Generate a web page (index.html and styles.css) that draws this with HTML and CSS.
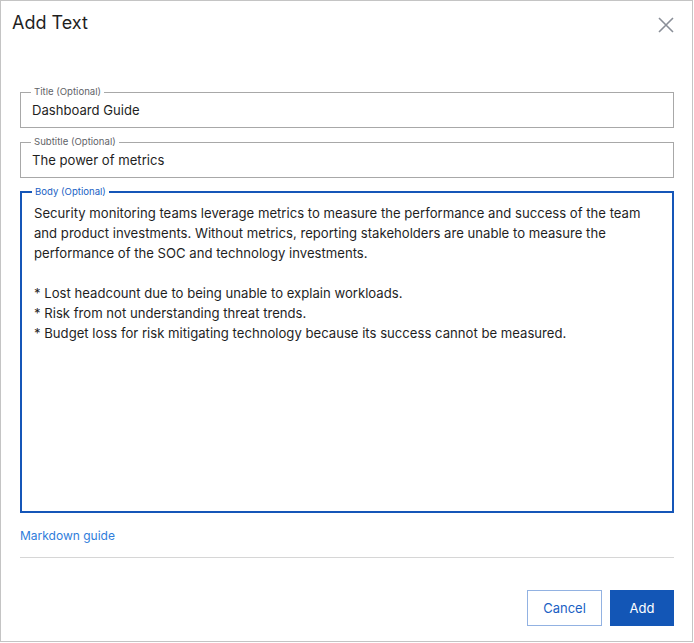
FILE: index.html
```html
<!DOCTYPE html>
<html>
<head>
<meta charset="utf-8">
<link rel="stylesheet" href="styles.css">
</head>
<body>
<div class="dialog">
  <div class="header">
    <h1 class="title">Add Text</h1>
    <button class="close" aria-label="Close">
      <svg width="16" height="16" viewBox="0 0 16 16"><path d="M1 1L15 15M15 1L1 15" stroke="#8a8f98" stroke-width="1.6" fill="none"/></svg>
    </button>
  </div>
  <div class="form">
    <fieldset class="field">
      <legend class="legend">Title (Optional)</legend>
      <div class="value">Dashboard Guide</div>
    </fieldset>
    <fieldset class="field">
      <legend class="legend">Subtitle (Optional)</legend>
      <div class="value">The power of metrics</div>
    </fieldset>
    <fieldset class="field field-active">
      <legend class="legend legend-active">Body (Optional)</legend>
      <div class="body-text">Security monitoring teams leverage metrics to measure the performance and success of the team<br>and product investments. Without metrics, reporting stakeholders are unable to measure the<br>performance of the SOC and technology investments.<br><br>* Lost headcount due to being unable to explain workloads.<br>* Risk from not understanding threat trends.<br>* Budget loss for risk mitigating technology because its success cannot be measured.</div>
    </fieldset>
    <a class="guide" href="#">Markdown guide</a>
    <div class="divider"></div>
  </div>
  <div class="footer">
    <button class="btn btn-secondary">Cancel</button>
    <button class="btn btn-primary">Add</button>
  </div>
</div>
</body>
</html>
```
FILE: styles.css
```css
* { box-sizing: border-box; }
html, body { margin: 0; padding: 0; background: #fff; }
body { font-family: Inter, "Noto Sans", sans-serif; color: #1f1f1f; }

.dialog {
  width: 693px;
  height: 642px;
  border: 1px solid #c4c4c4;
  background: #fff;
  display: flex;
  flex-direction: column;
}

.header {
  display: flex;
  justify-content: space-between;
  align-items: flex-start;
  padding: 10px 18px 0 11px;
  height: 85px;
}
.title {
  margin: 0;
  font-size: 18px;
  line-height: 24px;
  font-weight: 400;
  color: #1f1f1f;
}
.close {
  border: 0;
  background: none;
  padding: 0;
  margin-top: 6px;
  width: 16px;
  height: 16px;
  display: block;
  cursor: pointer;
}
.close svg { display: block; }

.form {
  padding: 0 18px 0 19px;
  display: flex;
  flex-direction: column;
}

.field {
  margin: 0 0 8px 0;
  padding: 0 11px 5px 11px;
  border: 1px solid #a8a8a8;
  min-width: 0;
}
.legend {
  font-size: 9.6px;
  line-height: 12px;
  color: #5f6368;
  padding: 0 3px;
  margin-left: -1px;
}
.value {
  font-size: 13.1px;
  line-height: 24px;
  height: 24px;
  color: #1f1f1f;
}

.field-active {
  border: 2px solid #1556b8;
  height: 327px;
  padding: 5px 12px 0 12px;
  margin-bottom: 0;
}
.legend-active {
  color: #1a5fc4;
  margin-left: -2px;
}
.body-text {
  font-size: 13.13px;
  line-height: 20px;
  color: #1f1f1f;
  white-space: nowrap;
}

.guide {
  margin-top: 15px;
  font-size: 12px;
  line-height: 16px;
  color: #2f7ddb;
  text-decoration: none;
  align-self: flex-start;
}
.divider {
  margin-top: 13px;
  height: 1px;
  background: #d6d6d6;
}

.footer {
  display: flex;
  justify-content: flex-end;
  gap: 8px;
  padding: 32px 18px 0 19px;
}
.btn {
  font-family: Inter, "Noto Sans", sans-serif;
  font-size: 13px;
  height: 36px;
  line-height: 20px;
  cursor: pointer;
}
.btn-secondary {
  width: 75px;
  background: #fff;
  border: 1px solid #92b2e2;
  color: #1a5fc4;
}
.btn-primary {
  width: 64px;
  background: #1356b6;
  border: 1px solid #1356b6;
  color: #fff;
}
```
